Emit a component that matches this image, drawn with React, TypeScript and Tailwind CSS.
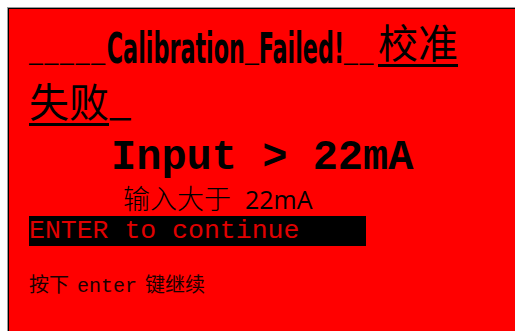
import React from "react";

export default function App() {
  return (
    <div className="min-h-[331px] w-[515px] overflow-hidden bg-white pl-[7px] pt-[7px]">
      <div className="border-l border-t border-[#9a9a9a]">
        <div className="flex h-[323px] flex-col border-l border-t border-black bg-[#ff0000] pl-[20px] pt-[4px] text-black">
          {/* title */}
          <div className="w-[460px] font-['Noto_Sans_CJK_SC',sans-serif] text-[40px] leading-[56px]">
            <span className="inline-block w-[349px] whitespace-nowrap align-baseline">
              <span className="inline-block origin-left translate-y-[5px] scale-x-[0.59] font-['DejaVu_Sans_Condensed',sans-serif] text-[42px] font-bold">
                <span className="relative -top-[3px] font-['Liberation_Sans',sans-serif] tracking-[3px]">_____</span>
                Calibration
                <span className="relative -top-[3px] font-['Liberation_Sans',sans-serif]">_</span>
                Failed!
                <span className="relative -top-[3px] font-['Liberation_Sans',sans-serif] tracking-[3px]">__</span>
              </span>
            </span>
            <span className="underline decoration-[3px] underline-offset-[6px]">校准失败</span>
            <span className="relative -top-[2px]">_</span>
          </div>

          {/* input line */}
          <div className="mt-[7px] whitespace-pre pl-[82px] font-['Liberation_Mono',monospace] text-[42px] font-bold leading-[46px]">
            Input &gt; 22mA
          </div>

          <div className="mt-[1px] flex items-baseline gap-[14px] pl-[94px] leading-[32px]">
            <span className="font-['Noto_Sans_CJK_SC',sans-serif] text-[27px] font-light">输入大于</span>
            <span className="font-['Open_Sans',sans-serif] text-[25px]">22mA</span>
          </div>

          {/* enter bar */}
          <div className="mt-[1px] h-[30px] w-[337px] whitespace-pre bg-black font-['Liberation_Mono',monospace] text-[26.5px] leading-[30px] text-[#e00000]">
            ENTER to continue
          </div>

          <div className="mt-[28px] font-['Liberation_Mono','Noto_Sans_CJK_SC',monospace] text-[20px] leading-[26px] text-[#1a0000] [word-spacing:-4px]">
            按下 enter 键继续
          </div>
        </div>
      </div>
    </div>
  );
}
